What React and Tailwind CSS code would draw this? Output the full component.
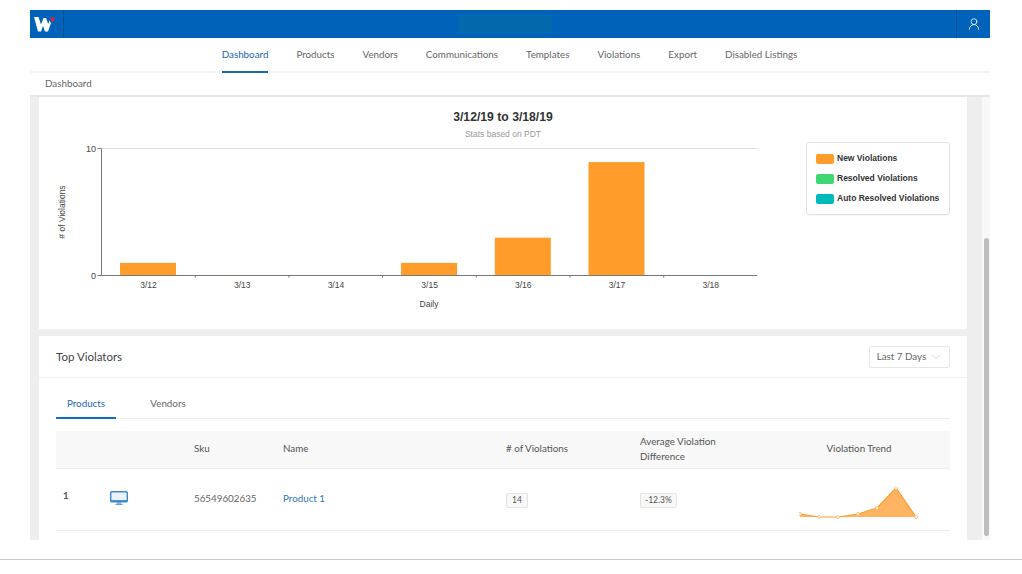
import { UserRound, ChevronDown } from "lucide-react";

const navItems = ["Dashboard", "Products", "Vendors", "Communications", "Templates", "Violations", "Export", "Disabled Listings"];
const days = ["3/12", "3/13", "3/14", "3/15", "3/16", "3/17", "3/18"];
const counts = [1, 0, 0, 1, 3, 9, 0];
const legend = [
  { label: "New Violations", color: "bg-[#ff9c2a]" },
  { label: "Resolved Violations", color: "bg-[#3fd774]" },
  { label: "Auto Resolved Violations", color: "bg-[#00b9bd]" },
];

function Logo() {
  return (
    <svg width="22" height="16" viewBox="0 0 22 16" className="mr-[3px]">
      <path d="M0 1h4.500L7 8.500 9.500 2H12l2.200 6 1.300-3.500L17 7l-3 8.500h-3L9 10l-2 5.500H4z" fill="#fff" />
      <path d="M16 1.500h5l-2.500 5z" fill="#f0202c" />
    </svg>
  );
}

function BarChart() {
  const left = 45.5;
  const step = 93.7;
  const base = 134.5;
  return (
    <svg width="702" height="172" viewBox="0 0 702 172" className="shrink-0">
      <g fontFamily="Liberation Sans, sans-serif" fontSize="8.5" fill="#444">
        <text x="40" y="10.5" textAnchor="end" fontSize="9">10</text>
        <text x="40" y="138" textAnchor="end" fontSize="9">0</text>
        <text transform="translate(9 71) rotate(-90)" textAnchor="middle">
          # of Violations
        </text>
        <text x="373" y="166" textAnchor="middle">Daily</text>
        {days.map((d, i) => (
          <text key={d} x={left + step * i + 47} y="147" textAnchor="middle">{d}</text>
        ))}
      </g>
      <line x1={left} x2="701" y1="7.5" y2="7.5" stroke="#ddd" />
      {counts.map((c, i) => c > 0 && (
        <rect key={i} x={left + step * i + 18.5} y={base - c * 12.6} width="56" height={c * 12.6} fill="#ff9c2a" />
      ))}
      <path d={`M${left - 4} 7.5h4V${base}h-4M${left} ${base}H701`} fill="none" stroke="#777" strokeWidth="1" />
      {[1, 2, 3, 4, 5, 6].map((i) => (
        <line key={i} x1={left + step * i} x2={left + step * i} y1={base} y2={base + 2} stroke="#777" />
      ))}
    </svg>
  );
}

function Sparkline() {
  const pts = [[1, 27], [20, 30], [39, 30], [59, 27], [78, 21], [97, 1], [117, 30]];
  const line = pts.map((p) => p.join(",")).join(" ");
  return (
    <svg width="120" height="32" viewBox="0 0 120 32">
      <polygon points={`${line} 1,30`} fill="#ffb463" />
      <polyline points={line} fill="none" stroke="#ff9c2a" strokeWidth="1.2" />
      {pts.map((p, i) => (
        <circle key={i} cx={p[0]} cy={p[1]} r="1.5" fill="#fff" stroke="#ffb463" strokeWidth="0.8" />
      ))}
    </svg>
  );
}

function Monitor() {
  return (
    <svg width="18" height="14" viewBox="0 0 18 14" fill="none">
      <rect x="0.7" y="0.7" width="16.6" height="10" rx="1" fill="#eaf2fb" stroke="#3f87cf" strokeWidth="1.4" />
      <path d="M1 9.700h16" stroke="#3f87cf" strokeWidth="1.2" />
      <path d="M8 11v2M10 11v2M5.500 13.300h7" stroke="#3f87cf" />
    </svg>
  );
}

export default function App() {
  return (
    <div className="w-[1022px] h-[574px] bg-white overflow-hidden font-['Lato',sans-serif] text-[#555]">
      <div className="ml-[30px] w-[960px] h-[540px] flex flex-col pt-[10px]">
        {/* Top bar */}
        <div className="h-[28px] bg-[#0062b8] flex items-center justify-between shrink-0">
          <div className="w-[34px] h-full border-r border-[#04508f] flex items-center justify-center">
            <Logo />
          </div>
          <div className="w-[94px] h-[18px] bg-[#0468ad] mr-[10px]" />
          <div className="w-[34px] h-full border-l border-[#04508f] flex items-center justify-center">
            <UserRound className="w-[14px] h-[14px] text-white" strokeWidth={1.3} />
          </div>
        </div>

        {/* Nav */}
        <div className="h-[35px] border-b-2 border-[#f3f3f3] flex justify-center gap-[28px] pr-[1px] shrink-0 box-border">
          {navItems.map((item, i) => (
            <div
              key={item}
              className={`h-[35px] flex items-center pb-[1px] text-[9.8px] border-b-2 ${i === 0 ? "text-[#1a66b5] border-[#1a66b5]" : "text-[#666] border-transparent"}`}
            >
              {item}
            </div>
          ))}
        </div>

        {/* Breadcrumb */}
        <div className="h-[24px] border-b-2 border-[#e6e6e6] pl-[15px] pb-[2px] flex items-center text-[9.8px] text-[#666] shrink-0">
          Dashboard
        </div>

        {/* Scrolling content */}
        <div className="flex flex-1 min-h-0 overflow-hidden">
          <div className="w-[952px] bg-[#eeeeee] pl-[9px] pr-[15px] flex flex-col gap-[7px] min-h-0">
            {/* Chart card */}
            <div className="bg-white h-[232px] px-[17px] pt-[12px] shrink-0">
              <div className="text-center text-[12.2px] font-bold text-[#333] leading-[16px] font-['Liberation_Sans',sans-serif]">3/12/19 to 3/18/19</div>
              <div className="text-center text-[8.5px] text-[#999] mt-[3px] leading-[12px] font-['Liberation_Sans',sans-serif]">Stats based on PDT</div>
              <div className="flex justify-between mt-[1px]">
                <BarChart />
                <div className="w-[144px] h-[73px] mt-[1px] border border-[#e2e2e2] rounded-[3px] pl-[9px] flex flex-col justify-center gap-[8px] shadow-[0_1px_1px_rgba(0,0,0,0.04)]">
                  {legend.map((l) => (
                    <div key={l.label} className="flex items-center gap-[3px] h-[12px]">
                      <span className={`w-[18px] h-[10px] rounded-[2px] ${l.color}`} />
                      <span className="text-[8.5px] font-bold text-[#333] font-['Liberation_Sans',sans-serif]">{l.label}</span>
                    </div>
                  ))}
                </div>
              </div>
            </div>

            {/* Top violators card */}
            <div className="bg-white flex-1 min-h-0 shrink-0">
              <div className="h-[42px] border-b border-[#eeeeee] px-[17px] flex items-center justify-between">
                <span className="text-[11.5px] text-[#444]">Top Violators</span>
                <div className="w-[81px] h-[22px] border border-[#e6e6e6] rounded-[2px] flex items-center justify-center gap-[4px] text-[9.8px] text-[#666]">
                  Last 7 Days
                  <ChevronDown className="w-[12px] h-[12px] text-[#aaa]" strokeWidth={1} />
                </div>
              </div>
              <div className="px-[17px]">
                <div className="h-[29px] mt-[12px] border-b border-[#eeeeee] flex text-[9.8px]">
                  <div className="w-[60px] h-[29px] flex items-center justify-center border-b-2 border-[#0d6ec4] text-[#1a66b5]">Products</div>
                  <div className="w-[104px] h-[29px] pb-[2px] flex items-center justify-center text-[#666]">Vendors</div>
                </div>
                <div className="mt-[12px] h-[38px] pb-[2px] bg-[#f8f8f8] border-b border-[#eeeeee] grid grid-cols-[138px_89px_223px_134px_128px_1fr] items-center text-[9.8px] text-[#555]">
                  <div />
                  <div>Sku</div>
                  <div>Name</div>
                  <div># of Violations</div>
                  <div className="leading-[15px] pr-[20px]">Average Violation Difference</div>
                  <div className="text-center">Violation Trend</div>
                </div>
                <div className="h-[62px] border-b border-[#eeeeee] grid grid-cols-[53px_85px_89px_223px_134px_128px_1fr] items-center text-[9.8px]">
                  <div className="pl-[7px] pb-[7px] text-[9.5px] font-bold">1</div>
                  <div className="pb-[3px] pl-[1px]"><Monitor /></div>
                  <div className="text-[#666] pb-[2px]">56549602635</div>
                  <div className="text-[#2b78c2] pb-[2px]">Product 1</div>
                  <div>
                    <span className="inline-block border border-[#e4e4e4] bg-[#f8f8f8] rounded-[2px] px-[5px] text-[8.5px] leading-[13px]">14</span>
                  </div>
                  <div>
                    <span className="inline-block border border-[#e4e4e4] bg-[#f8f8f8] rounded-[2px] px-[4px] text-[8.5px] leading-[13px]">-12.3%</span>
                  </div>
                  <div className="flex justify-center pt-[6px]"><Sparkline /></div>
                </div>
              </div>
            </div>
          </div>

          {/* Scrollbar */}
          <div className="w-[8px] bg-[#f8f8f8] flex flex-col justify-end items-center">
            <div className="w-[5px] h-[298px] mb-[4px] rounded-full bg-[#bdbdbd]" />
          </div>
        </div>
      </div>
      <div className="mt-[19px] border-t border-[#c8c8c8]" />
    </div>
  );
}
